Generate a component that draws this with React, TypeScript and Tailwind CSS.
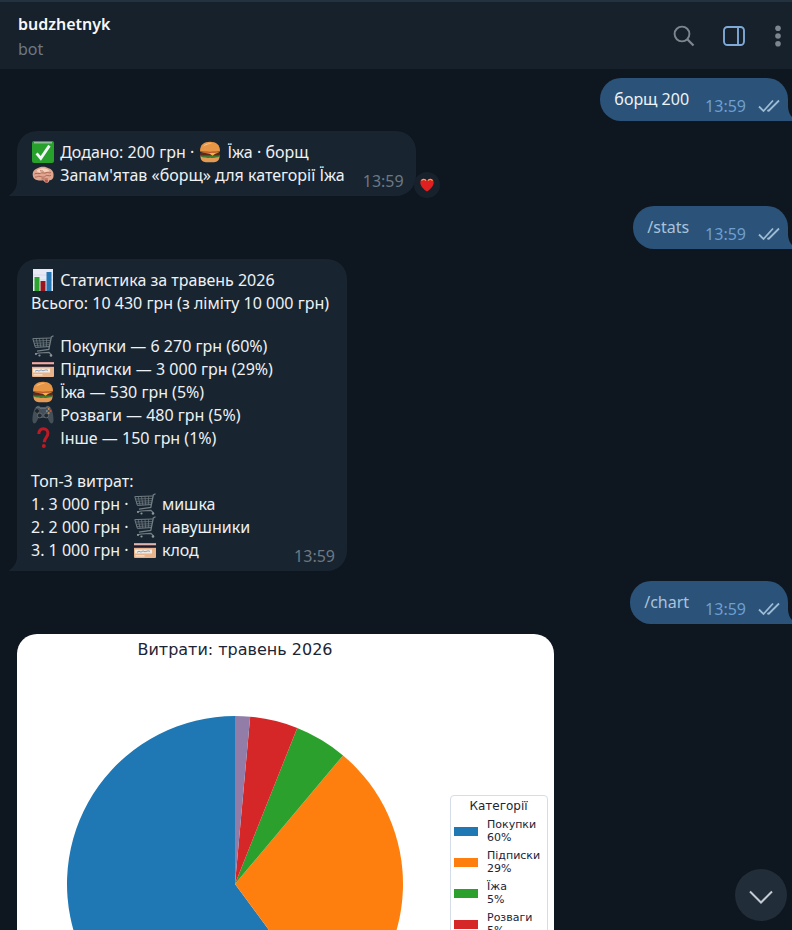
import React from "react";

type EmojiName =
  | "check"
  | "brain"
  | "burger"
  | "bars"
  | "cart"
  | "card"
  | "gamepad"
  | "question";

const emojiShapes: Record<EmojiName, React.ReactNode> = {
  check: (
    <>
      <rect x="0" y="0" width="22" height="22" rx="2" fill="#27a02c" />
      <path d="M2 1.2h18v1.2H2z" fill="#a9c3b4" />
      <path
        d="M4.6 12.4 8.8 17.4 17.4 4.6"
        fill="none"
        stroke="#f4f6fb"
        strokeWidth="2.8"
      />
    </>
  ),
  brain: (
    <>
      <path
        d="M1 12.5C-.3 8 2.600 5 6 4c3-1.900 8-1.800 10.500.3 3.200.8 5.500 3.700 5 7 .3 3-1.500 4.700-4 4.900-.4 1.600-1.500 2.600-3 2.600-1.700 0-2.300-1.600-3.500-2.500C7.500 17 2 16.500 1 12.500z"
        fill="#e0a58e"
      />
      <path
        d="M4.500 7C7 3.500 14.500 3 17.500 7c-3 1.500-5 .5-7 1.500S6.500 8.500 4.500 7z"
        fill="#f3d3bf"
      />
      <path
        d="M2.500 10c2-1.500 4 .5 6-.8s3.500.8 5.500-.4 3 .8 5-.2M3 13c2 .5 3-1.500 5.500-.5s3.500 1 5-.5 3 .5 5.500-.5M8 6.500c1 1 2.500 0 3.500 1M9.500 15c2-.5 4 .5 6-.5"
        fill="none"
        stroke="#a8604f"
        strokeWidth=".9"
      />
      <path d="M12.500 15.800l3.400-.4c.3 1.600-.2 2.800-1.300 3-1 .1-1.700-1.200-2.100-2.600z" fill="#b3564b" />
    </>
  ),
  burger: (
    <>
      <path d="M1.500 15h19c.3 3.800-2.200 6.200-5.500 6.200H7c-3.300 0-5.800-2.400-5.500-6.200z" fill="#e39a55" />
      <path d="M1 13.800c2-1.200 18-1.200 20 0 .2 1.500-1 1.700-2 2.600-1.500-.6-2.400.9-4 .3-1.800.9-3.200-.6-5 .3-2 .3-3-.9-5-.5-1.500-.3-4-.9-4-2.700z" fill="#3f7a32" />
      <path d="M2 11.500h18c1.500.8 1.500 2.300 0 3H2c-1.500-.7-1.500-2.200 0-3z" fill="#5a2a1c" />
      <path d="M2 11.300h18.500l-4.200 1.500-2.800 2-2.800-2z" fill="#f3b63c" />
      <path d="M1 9.300h20v1.500c-.6 1.100-19.400 1.100-20 0z" fill="#c33c2b" />
      <path d="M1 9.800C1 4 5 .8 11 .8S21 4 21 9.800c-4 1.200-16 1.200-20 0z" fill="#e69645" />
      <path d="M4 5.500C6 2.500 10 1.800 13 2.500c-3 .4-6 1.600-9 3z" fill="#f6c48a" />
    </>
  ),
  bars: (
    <>
      <rect x="1" y="0" width="20" height="22" fill="#e9e9f6" />
      <path d="M1 6h20M1 11h20M1 16h20" stroke="#cfd0e2" strokeWidth=".6" />
      <rect x="2.500" y="8" width="5" height="14" fill="#2aa52e" />
      <rect x="8.500" y="12" width="5" height="10" fill="#98161c" />
      <rect x="14.500" y="3" width="5" height="19" fill="#2477b5" />
    </>
  ),
  cart: (
    <g fill="none" stroke="#727d84">
      <path d="M21.500.8 19.300 2 16.800 14.500 5 16.200" strokeWidth="1.300" />
      <path d="M.8 3.600 18.700 3M.8 3.600l2.600 8.800 13.800-.8" strokeWidth="1" />
      <path
        d="M1.400 6l16.900-.5M2.200 8.300l15.700-.6M2.800 10.500l14.600-.8M4.200 3.600l1.900 8.600M7.500 3.500l1.300 8.500M11 3.400l.6 8.500M14.600 3.300l-.2 8.500"
        strokeWidth=".7"
      />
      <path d="M3 18.800l4-.8 10-.6 2.500 2.600" strokeWidth="1.200" />
      <circle cx="4" cy="19" r="1" fill="#8b959b" stroke="none" />
      <circle cx="7.500" cy="20.500" r="1.100" fill="#8b959b" stroke="none" />
      <circle cx="19" cy="20.500" r="1.300" fill="#8b959b" stroke="none" />
    </g>
  ),
  card: (
    <>
      <rect x="0" y="4" width="22" height="15" rx="1" fill="#e8b48c" />
      <path d="M0 4h22v1.800H0z" fill="#e9d6dc" />
      <path d="M0 4.800h22" stroke="#c4605c" strokeWidth=".8" />
      <path d="M0 6.300h22v2.500H0z" fill="#1d1a2b" />
      <path d="M1 10.500h17v4H1z" fill="#f2ebe4" />
      <path d="M3 13.300l2-1 2 .8 2-1.200 2 .9 3-1 2 .6" fill="none" stroke="#6d8fae" strokeWidth=".8" />
      <path d="M1.500 16.800h9" stroke="#f6dcc5" strokeWidth="1.500" />
    </>
  ),
  gamepad: (
    <>
      <path
        d="M4.500 2.500c1.800-1.200 3.300-.6 4 .5h5c.7-1.100 2.200-1.700 4-.5 2.500 1.500 4.300 9 4 14-.2 3.500-2.800 3.700-4 1.300L15.500 14h-9l-2 3.800C3.300 20.200.7 20 .5 16.500c-.3-5 1.500-12.500 4-14z"
        fill="#454f57"
      />
      <path d="M4.200 3.600c1.500-1 3-.7 3.700.6h6.200c.7-1.300 2.200-1.600 3.700-.6" fill="none" stroke="#7c878e" strokeWidth=".8" />
      <circle cx="7.800" cy="11.500" r="2.400" fill="#222a31" stroke="#6f7a81" strokeWidth=".7" />
      <circle cx="14.200" cy="11.500" r="2.400" fill="#222a31" stroke="#6f7a81" strokeWidth=".7" />
      <path d="M5 5v4M3 7h4" stroke="#1b2228" strokeWidth="1.400" />
      <circle cx="16.700" cy="5" r="1" fill="#d98a4b" />
      <circle cx="18.600" cy="7" r="1" fill="#c6543a" />
      <circle cx="14.900" cy="7" r="1" fill="#6f8b9c" />
      <circle cx="16.700" cy="8.900" r="1" fill="#b98c56" />
    </>
  ),
  question: (
    <>
      <path
        d="M6.800 7C6.800 3.600 8.800 1.800 11.400 1.800c2.700 0 4.500 1.800 4.500 4.500 0 3.600-3.600 4.600-3.600 9"
        fill="none"
        stroke="#bd1a24"
        strokeWidth="3"
      />
      <circle cx="11.800" cy="19" r="2" fill="#bd1a24" />
    </>
  ),
};

const Emoji: React.FC<{ name: EmojiName; label: string }> = ({ name, label }) => (
  <svg
    viewBox="0 0 22 22"
    role="img"
    aria-label={label}
    className="inline-block w-[22px] h-[22px] ml-px mr-0.5 -mt-1.5 -mb-0.5 align-middle"
  >
    {emojiShapes[name]}
  </svg>
);

const Line: React.FC<{ children: React.ReactNode }> = ({ children }) => (
  <div className="h-[23px] whitespace-nowrap">{children}</div>
);

const Time: React.FC<{ className: string }> = ({ className }) => (
  <time dateTime="13:59" className={className}>
    13:59
  </time>
);

const Incoming: React.FC<{ children: React.ReactNode }> = ({ children }) => (
  <div className="relative self-start rounded-[20px] rounded-bl-none bg-[#182530] pl-3.5 pr-3 pt-2.5 pb-[3px] text-[#eef1f5]">
    {children}
    <svg viewBox="0 0 8 14" className="absolute right-full bottom-0 w-2 h-3.5" fill="#182530">
      <path d="M8 0v14H1c-1 0-1-.7-.3-1.200C5 10 7.500 6 8 0z" />
    </svg>
  </div>
);

const Outgoing: React.FC<{ text: string; command?: boolean }> = ({ text, command }) => (
  <div className="relative self-end flex items-end mr-1 rounded-[21px] rounded-br-none bg-[#2b5278] pl-3.5 pr-2 pt-2.5 pb-[3px]">
    <p className={command ? "pb-[7px] text-[#a9c3dc]" : "pb-[7px] text-[#eef3f8]"}>{text}</p>
    <Time className="ml-4 text-[#6f9fd0]" />
    <svg
      viewBox="0 0 22 14"
      className="ml-3 mb-[5px] w-[22px] h-3.5"
      fill="none"
      stroke="#9dbbd4"
      strokeWidth="1.800"
      role="img"
      aria-label="Прочитано"
    >
      <path d="M1 7.500 5.500 12 15 1.500M10.500 12 21 1.500M9.500 11l1.300 1.300" />
    </svg>
    <svg viewBox="0 0 8 14" className="absolute left-full bottom-0 w-2 h-3.5" fill="#2b5278">
      <path d="M0 0v14h7c1 0 1-.7.3-1.200C3 10 .5 6 0 0z" />
    </svg>
  </div>
);

const categories: { name: string; emoji: EmojiName; sum: string; value: number; percent: number; color: string }[] = [
  { name: "Покупки", emoji: "cart", sum: "6 270", value: 6270, percent: 60, color: "#1f77b4" },
  { name: "Підписки", emoji: "card", sum: "3 000", value: 3000, percent: 29, color: "#ff7f0e" },
  { name: "Їжа", emoji: "burger", sum: "530", value: 530, percent: 5, color: "#2ca02c" },
  { name: "Розваги", emoji: "gamepad", sum: "480", value: 480, percent: 5, color: "#d62728" },
  { name: "Інше", emoji: "question", sum: "150", value: 150, percent: 1, color: "#917da8" },
];

const topSpendings: { sum: string; emoji: EmojiName; category: string; name: string }[] = [
  { sum: "3 000", emoji: "cart", category: "Покупки", name: "мишка" },
  { sum: "2 000", emoji: "cart", category: "Покупки", name: "навушники" },
  { sum: "1 000", emoji: "card", category: "Підписки", name: "клод" },
];

// slices go counterclockwise from 12 o'clock
const PieChart: React.FC = () => {
  const total = categories.reduce((sum, c) => sum + c.value, 0);
  let angle = 0;
  const point = (a: number) => `${168 - 168 * Math.sin(a)} ${168 - 168 * Math.cos(a)}`;

  return (
    <svg viewBox="0 0 336 336" className="w-[336px] h-[336px] shrink-0" role="img" aria-label="Витрати за категоріями">
      {categories.map((c) => {
        const start = angle;
        angle += (c.value / total) * Math.PI * 2;
        const large = angle - start > Math.PI ? 1 : 0;
        return (
          <path
            key={c.name}
            d={`M168 168L${point(start)}A168 168 0 ${large} 0 ${point(angle)}Z`}
            fill={c.color}
          />
        );
      })}
    </svg>
  );
};

const ChartMessage: React.FC = () => (
  <figure className="self-start shrink-0 rounded-t-[20px] bg-white pl-[50px] pr-1.5 pt-1 pb-12 text-[#1b2436] font-['DejaVu_Sans',sans-serif]">
    <figcaption className="w-[336px] text-center text-base leading-6 whitespace-nowrap">
      Витрати: травень 2026
    </figcaption>
    <div className="flex items-center gap-[47px] mt-[54px]">
      <PieChart />
      <div className="w-[98px] h-[178px] rounded-sm border border-[#d5dde8] pl-[3px] pr-1">
        <div className="pt-0.5 text-center text-xs leading-4">Категорії</div>
        <ul className="flex flex-col gap-[5px] pt-1">
          {categories.map((c) => (
            <li key={c.name} className="flex items-center gap-[9px] text-[11px] leading-[13px]">
              <span className="w-6 h-[9px] shrink-0" style={{ backgroundColor: c.color }} />
              <span>
                {c.name}
                <br />
                {c.percent}%
              </span>
            </li>
          ))}
        </ul>
      </div>
    </div>
  </figure>
);

const Header: React.FC = () => (
  <header className="flex items-center justify-between shrink-0 h-[69px] border-t-2 border-[#243240] bg-[#17212b] pl-[18px] pr-[11px]">
    <div className="pt-0.5">
      <h1 className="font-semibold leading-[25px] text-[#f5f7fa]">budzhetnyk</h1>
      <p className="leading-[25px] text-[#6d7883]">bot</p>
    </div>
    <div className="flex items-center gap-7">
      <button aria-label="Пошук">
        <svg viewBox="0 0 22 22" className="w-[22px] h-[22px]" fill="none" stroke="#7d868e" strokeWidth="1.900">
          <circle cx="9" cy="9" r="7.400" />
          <path d="M14.300 14.300l6.200 6.200" strokeWidth="2.300" />
        </svg>
      </button>
      <button aria-label="Бічна панель">
        <svg viewBox="0 0 22 20" className="w-[22px] h-5" fill="none" stroke="#7fa9d6" strokeWidth="1.900">
          <rect x="1" y="1" width="20" height="18" rx="3.500" />
          <path d="M15 1v18" />
        </svg>
      </button>
      <button aria-label="Меню" className="ml-0.5">
        <svg viewBox="0 0 6 22" className="w-1.5 h-[22px]" fill="#7d868e">
          <circle cx="3" cy="3.200" r="2.800" />
          <circle cx="3" cy="11" r="2.800" />
          <circle cx="3" cy="18.800" r="2.800" />
        </svg>
      </button>
    </div>
  </header>
);

const App: React.FC = () => {
  return (
    <div className="flex flex-col h-screen overflow-hidden bg-[#0e1620] text-base leading-[23px] font-['Noto_Sans',sans-serif]">
      <Header />
      <main className="relative flex-1 min-h-0 overflow-hidden">
        <div className="flex flex-col gap-2.5 pl-[17px] pt-[9px]">
          <Outgoing text="борщ 200" />

          <Incoming>
            <div className="flex items-end gap-[18px]">
              <div className="pb-1.5">
                <Line>
                  <Emoji name="check" label="✅" /> Додано: 200 грн · <Emoji name="burger" label="🍔" /> Їжа · борщ
                </Line>
                <Line>
                  <Emoji name="brain" label="🧠" /> Запам'ятав «борщ» для категорії Їжа
                </Line>
              </div>
              <Time className="text-[#6d7883]" />
            </div>
            <button
              aria-label="Реакція: серце"
              className="absolute -right-6 -bottom-0.5 flex items-center justify-center w-[26px] h-[26px] rounded-full bg-[#17212b]"
            >
              <svg viewBox="0 0 14 14" className="w-3.5 h-3.5">
                <path
                  d="M7 13.500C3.500 11 .3 8 .3 4.400.3 2.200 1.800.8 3.700.8 5.200.8 6.400 1.700 7 3c.6-1.300 1.800-2.200 3.300-2.200 1.900 0 3.400 1.400 3.400 3.600 0 3.600-3.200 6.600-6.700 9.100z"
                  fill="#e02020"
                />
                <path d="M1.500 2.600C2.400.9 4.900.8 6 2.600M8 2.600c1.100-1.800 3.600-1.700 4.500 0" fill="none" stroke="#eda55c" strokeWidth="1.200" />
              </svg>
            </button>
          </Incoming>

          <Outgoing text="/stats" command />

          <Incoming>
            <div className="flex flex-col gap-5">
              <div className="pr-1.5">
                <Line>
                  <Emoji name="bars" label="📊" /> Статистика за травень 2026
                </Line>
                <Line>Всього: 10 430 грн (з ліміту 10 000 грн)</Line>
              </div>
              <div>
                {categories.map((c) => (
                  <Line key={c.name}>
                    <Emoji name={c.emoji} label={c.name} /> {c.name} — {c.sum} грн ({c.percent}%)
                  </Line>
                ))}
              </div>
              <div className="flex items-end justify-between">
                <div className="pb-1.5">
                  <Line>Топ-3 витрат:</Line>
                  {topSpendings.map((item, index) => (
                    <Line key={item.name}>
                      {index + 1}. {item.sum} грн · <Emoji name={item.emoji} label={item.category} /> {item.name}
                    </Line>
                  ))}
                </div>
                <Time className="text-[#6d7883]" />
              </div>
            </div>
          </Incoming>

          <Outgoing text="/chart" command />
          <ChartMessage />
        </div>

        <button
          aria-label="Прокрутити вниз"
          className="absolute right-[5px] bottom-[9px] flex items-center justify-center w-[52px] h-[52px] rounded-full bg-[#212d38]"
        >
          <svg viewBox="0 0 24 14" className="w-6 h-3.5 mt-1" fill="none" stroke="#c3cbd4" strokeWidth="2">
            <path d="M1 1.500l11 11 11-11" />
          </svg>
        </button>
      </main>
    </div>
  );
};

export default App;
